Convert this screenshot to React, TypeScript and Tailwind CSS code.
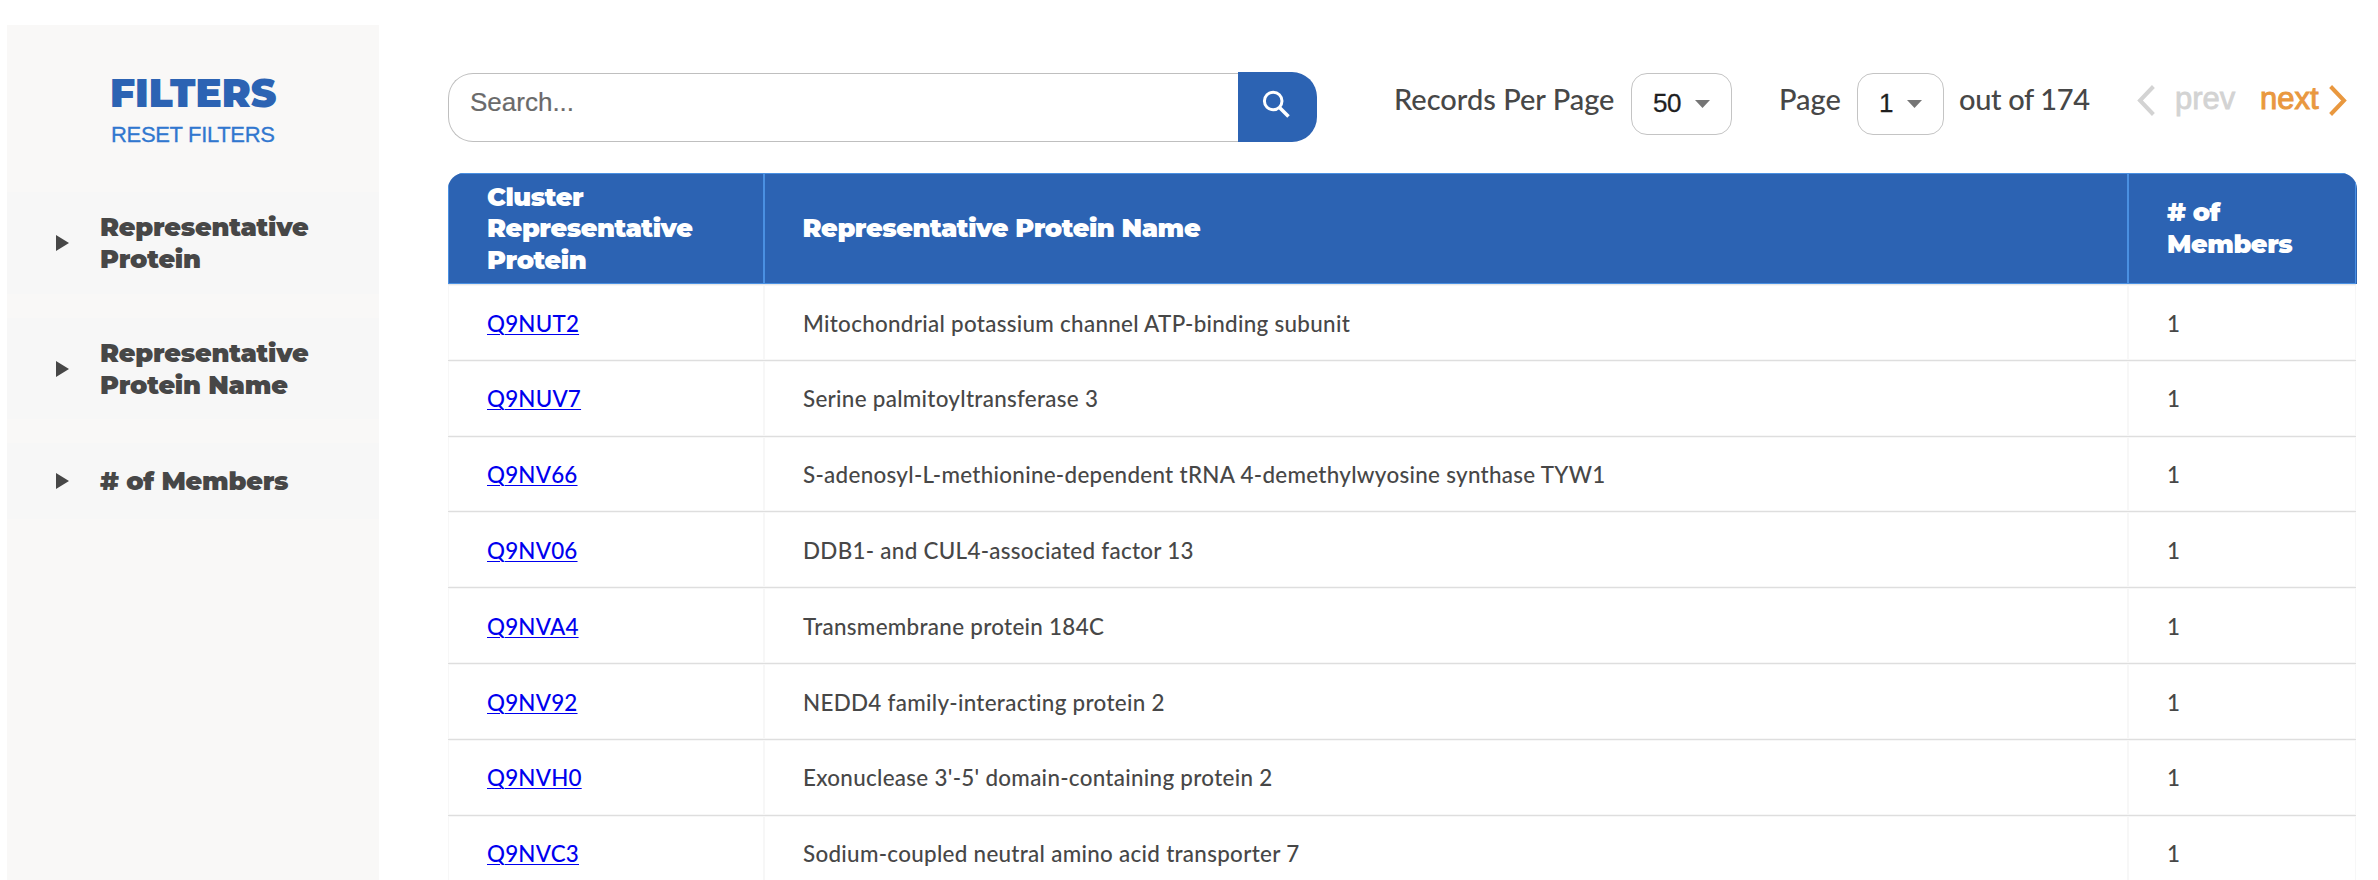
import React from "react";

const rows = [
  ["Q9NUT2", "Mitochondrial potassium channel ATP-binding subunit"],
  ["Q9NUV7", "Serine palmitoyltransferase 3"],
  ["Q9NV66", "S-adenosyl-L-methionine-dependent tRNA 4-demethylwyosine synthase TYW1"],
  ["Q9NV06", "DDB1- and CUL4-associated factor 13"],
  ["Q9NVA4", "Transmembrane protein 184C"],
  ["Q9NV92", "NEDD4 family-interacting protein 2"],
  ["Q9NVH0", "Exonuclease 3'-5' domain-containing protein 2"],
  ["Q9NVC3", "Sodium-coupled neutral amino acid transporter 7"],
];

const heading = "font-['Montserrat',sans-serif] font-black text-[25.6px]";

function FilterItem({ className, lines }: { className: string; lines: string[] }) {
  return (
    <div className={`flex items-center bg-[#f7f7f7] pl-[49px] ${className}`}>
      <svg width="13" height="16" viewBox="0 0 13 16" className="mr-[31px] shrink-0 fill-[#474747]">
        <path d="M0 0L13 8L0 16Z" />
      </svg>
      <div className={`${heading} leading-8 tracking-[-0.23px] text-[#474747]`}>
        {lines.map((line) => (
          <div key={line}>{line}</div>
        ))}
      </div>
    </div>
  );
}

function SelectBox({ value, className }: { value: string; className: string }) {
  return (
    <button
      className={`flex h-[62px] items-center justify-between rounded-[16px] border border-[#c4c4c4] bg-white px-[21px] pb-[2px] font-['Liberation_Sans',sans-serif] text-[26px] text-[#1f1f1f] ${className}`}
    >
      <span className="tracking-[-0.4px] [-webkit-text-stroke:0.3px_#1f1f1f]">{value}</span>
      <svg width="15" height="8" viewBox="0 0 15 8" className="mt-[2px] fill-[#757575]">
        <path d="M0 0H15L7.5 8Z" />
      </svg>
    </button>
  );
}

export default function App() {
  return (
    <div className="flex h-[880px] overflow-hidden bg-white pl-[7px] font-['Lato',sans-serif] text-[#474747]">
      <aside className="mt-[25px] w-[372px] shrink-0 bg-[#f9f8f7]">
        <div className="flex h-[167px] flex-col pl-[103px] pt-[46px]">
          <h2 className="font-['Montserrat',sans-serif] text-[39px] font-black leading-[44px] text-[#2c63b3]">
            FILTERS
          </h2>
          <button className="ml-px mt-[7px] text-left font-['Liberation_Sans',sans-serif] text-[22px] leading-[26px] tracking-[-0.33px] text-[#3177cf] [-webkit-text-stroke:0.3px_#3177cf]">
            RESET FILTERS
          </button>
        </div>
        <div className="flex flex-col gap-6">
          <FilterItem className="h-[102px]" lines={["Representative", "Protein"]} />
          <FilterItem className="h-[101px]" lines={["Representative", "Protein Name"]} />
          <FilterItem className="h-[76px]" lines={["# of Members"]} />
        </div>
      </aside>

      <main className="ml-[69px] w-[1909px] shrink-0 pt-[72px]">
        <div className="flex h-[101px] items-start">
          <div className="flex h-[70px] w-[869px] shrink-0 items-end">
            <input
              placeholder="Search..."
              className="h-[69px] w-[790px] rounded-l-[25px] border border-r-0 border-[#bfbfbf] bg-white pb-[10px] pl-[21px] font-['Liberation_Sans',sans-serif] text-[26px] placeholder:text-[#6a6a6a] placeholder:opacity-100 [-webkit-text-stroke:0.2px_#6a6a6a]"
            />
            <button className="flex h-[70px] w-[79px] justify-center rounded-r-[25px] bg-[#2c63b3] pt-[18px]">
              <svg width="30" height="30" viewBox="0 0 30 30" fill="none" stroke="#fff" className="mr-[4px]">
                <circle cx="12.2" cy="11" r="8.8" strokeWidth="3" />
                <path d="M18.5 17.5L27.5 26.5" strokeWidth="3.6" />
              </svg>
            </button>
          </div>

          <div className="mt-px flex h-[62px] items-center text-[29px] font-medium leading-[36px]">
            <span className="ml-[77px] w-[237px] shrink-0 pb-[10px]">Records Per Page</span>
            <SelectBox value="50" className="w-[101px] font-normal" />
            <span className="ml-[47px] w-[78px] shrink-0 pb-[10px]">Page</span>
            <SelectBox value="1" className="w-[87px] font-normal" />
            <span className="ml-[15px] w-[178px] shrink-0 pb-[10px] tracking-[-0.35px]">out of 174</span>
            <button className="flex items-center gap-[20px] pb-[10px] font-['Liberation_Sans',sans-serif] text-[31px] font-normal text-[#d3d3d3]">
              <svg width="18" height="31" viewBox="0 0 18 31" fill="none" stroke="currentColor" strokeWidth="4" className="mt-[2px]">
                <path d="M16.4 1.5L3 15.5L16.4 29.5" />
              </svg>
              <span className="w-[85px] text-left [-webkit-text-stroke:0.8px_#d3d3d3]">prev</span>
            </button>
            <button className="flex items-center pb-[10px] font-['Liberation_Sans',sans-serif] text-[31px] font-normal text-[#e9983f]">
              <span className="w-[69px] text-left [-webkit-text-stroke:1px_#e9983f]">next</span>
              <svg width="18" height="31" viewBox="0 0 18 31" fill="none" stroke="currentColor" strokeWidth="4" className="mt-[2px]">
                <path d="M1.6 1.5L15 15.5L1.6 29.5" />
              </svg>
            </button>
          </div>
        </div>

        <div className="w-[1909px] overflow-hidden rounded-t-[16px] bg-[#2c63b3]">
          <div
            className={`${heading} grid h-[111px] w-[1908px] grid-cols-[315px_1364px_227px] border border-[#4a90e2] pb-px leading-[31.6px] tracking-[-0.45px] text-white`}
          >
            <div className="-mb-px flex flex-col justify-center border-r border-[#4a90e2] pb-px pl-[38px]">
              <div>Cluster</div>
              <div>Representative</div>
              <div>Protein</div>
            </div>
            <div className="-mb-px flex flex-col justify-center border-x border-[#4a90e2] pb-px pl-[37.5px]">
              <div>Representative Protein Name</div>
            </div>
            <div className="-mb-px flex flex-col justify-center border-l border-[#4a90e2] pb-px pl-[38px]">
              <div># of</div>
              <div>Members</div>
            </div>
          </div>
        </div>

        <div className="w-[1908px] border-t border-[#e8e8e8] text-[22.4px] font-medium tracking-[0.3px]">
          {rows.map(([id, name]) => (
            <div key={id} className="grid h-[75.8px] grid-cols-[316px_1364px_228px] border-b border-[#dedede]">
              <div className="flex items-center border border-[#f7f7f7] pl-[38px] pt-[2px]">
                <a href="#" className="tracking-[0.2px] text-[#0000ee] underline decoration-1 underline-offset-[2px]">
                  {id}
                </a>
              </div>
              <div className="flex items-center border border-[#f7f7f7] pl-[38px] pt-[2px]">{name}</div>
              <div className="flex items-center border border-[#f7f7f7] pl-[38px] pt-[2px]">1</div>
            </div>
          ))}
        </div>
      </main>
    </div>
  );
}
